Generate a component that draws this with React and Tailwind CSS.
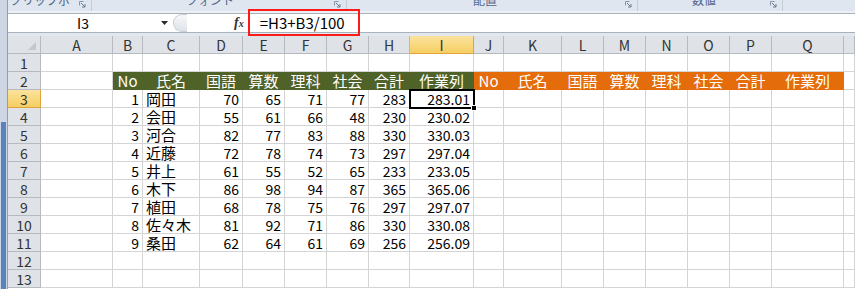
const COLS = ['A', 'B', 'C', 'D', 'E', 'F', 'G', 'H', 'I', 'J', 'K', 'L', 'M', 'N', 'O', 'P', 'Q', '']

const HEAD = ['No', '氏名', '国語', '算数', '理科', '社会', '合計', '作業列']

const DATA = [
  [1, '岡田', 70, 65, 71, 77, 283, '283.01'],
  [2, '会田', 55, 61, 66, 48, 230, '230.02'],
  [3, '河合', 82, 77, 83, 88, 330, '330.03'],
  [4, '近藤', 72, 78, 74, 73, 297, '297.04'],
  [5, '井上', 61, 55, 52, 65, 233, '233.05'],
  [6, '木下', 86, 98, 94, 87, 365, '365.06'],
  [7, '植田', 68, 78, 75, 76, 297, '297.07'],
  [8, '佐々木', 81, 92, 71, 86, 330, '330.08'],
  [9, '桑田', 62, 64, 61, 69, 256, '256.09'],
]

const GRID =
  'grid grid-cols-[33px_72px_30px_57px_43px_42px_42px_42px_41px_64px_30px_58px_42px_42px_42px_42px_42px_72px_1fr]'

function Launcher() {
  return (
    <svg width="7" height="7" viewBox="0 0 7 7" className="absolute right-[5px] top-[1px]">
      <path d="M0.5 0.5h4M0.5 0.5v4" stroke="#8795a8" fill="none" />
      <path d="M2 2l4 4M6 3v3h-3" stroke="#6a7a90" fill="none" />
    </svg>
  )
}

function Group({ label, className, pad }) {
  return (
    <div className={'relative flex h-full shrink-0 justify-center border-r border-[#c5ccd6] ' + className}>
      <span className={'-mt-[8px] text-[12px] leading-[16px] text-[#50668a] ' + pad}>{label}</span>
      <Launcher />
    </div>
  )
}

function Cell({ row, col }) {
  let text = null
  let kind = 'plain'
  if (row === 2 && col >= 1 && col <= 8) {
    kind = 'green'
    text = HEAD[col - 1]
  } else if (row === 2 && col >= 9 && col <= 16) {
    kind = 'orange'
    text = HEAD[col - 9]
  } else if (row >= 3 && row <= 11 && col >= 1 && col <= 8) {
    text = DATA[row - 3][col - 1]
    kind = col === 2 ? 'name' : 'num'
  }

  const selected = row === 3 && col === 8

  const cls = {
    plain: 'bg-white border-[#d4d4d4]',
    green: 'bg-[#4f6228] border-[#4f6228] text-white justify-center text-[15px]',
    orange: 'bg-[#e46c0a] border-[#e46c0a] text-white justify-center text-[15px]',
    name: 'bg-white border-[#d4d4d4] text-black justify-start pl-[3px] text-[15px]',
    num: 'bg-white border-[#d4d4d4] text-black justify-end pr-[3px] text-[14px]',
  }[kind]

  return (
    <div className={'relative flex h-[18px] items-center whitespace-nowrap border-r border-b leading-[16px] ' + cls}>
      {text}
      {selected && (
        <div className="pointer-events-none absolute -left-px -top-px z-10 h-[20px] w-[66px] border-2 border-black">
          <div className="absolute -bottom-[4px] -right-[4px] h-[6px] w-[6px] border border-white bg-black" />
        </div>
      )}
    </div>
  )
}

export default function App() {
  return (
    <div className="flex h-[289px] w-[855px] overflow-hidden bg-white font-['Noto_Sans_CJK_JP',sans-serif] text-black">
      {/* window edge */}
      <div className="flex w-[8px] shrink-0 flex-col border-r border-[#8e9fb6] bg-[#cdd6e2]">
        <div className="h-[122px]" />
        <div className="ml-px w-[5px] flex-1 bg-[#5a82bf]" />
      </div>

      <div className="flex min-w-0 flex-1 flex-col">
        {/* ribbon group labels, cut off */}
        <div className="flex h-[11px] overflow-hidden bg-[#dfe6ef]">
          <Group label="クリップボード" className="w-[84px] justify-start" pad="pl-[2px]" />
          <Group label="フォント" className="w-[255px]" pad="pr-[18px]" />
          <Group label="配置" className="w-[291px]" pad="pr-[14px]" />
          <Group label="数値" className="w-[145px]" pad="pr-[12px]" />
          <div className="flex-1" />
        </div>
        <div className="h-[2px] bg-[#edf1f6]" />

        {/* formula bar */}
        <div className="relative flex h-[20px] items-center border-y border-[#a7b1be] bg-white">
          <div className="flex w-[150px] justify-center text-[14px] leading-[16px]">I3</div>
          <svg width="8" height="5" viewBox="0 0 8 5" className="ml-[3px]">
            <path d="M0 0h7l-3.5 4z" fill="#2b2b2b" />
          </svg>
          <div className="ml-[4px] h-[18px] w-[14px] rounded-l-full border border-r-0 border-[#c9ced6] bg-gradient-to-b from-[#f7f8fa] to-[#dfe3e8]" />
          <div className="ml-[47px] font-['Liberation_Serif',serif] text-[14px] font-bold italic leading-[16px] text-[#333]">
            f<span className="text-[10px]">x</span>
          </div>
          <div className="ml-[16px] text-[15px] leading-[16px]">=H3+B3/100</div>
          <div className="absolute left-[240px] top-[-5px] h-[27px] w-[112px] border-2 border-[#ff1a1a]" />
        </div>
        <div className="h-[3px] bg-[#e3e8ee]" />

        {/* column headers */}
        <div className={GRID + ' text-[14px] leading-[16px] text-[#333]'}>
          <div className="relative h-[18px] border-r border-b border-[#b5bac1] bg-[#dfe3e8]">
            <svg width="8" height="8" viewBox="0 0 8 8" className="absolute bottom-[3px] right-[4px]">
              <path d="M8 0v8h-8z" fill="#c3c8ce" />
            </svg>
          </div>
          {COLS.map((c) =>
            c === 'I' ? (
              <div
                key={c}
                className="flex h-[18px] items-center justify-center border-r border-b border-[#e1a33c] bg-gradient-to-b from-[#fbe39c] to-[#f6cf62]"
              >
                {c}
              </div>
            ) : (
              <div
                key={c || 'R'}
                className="flex h-[18px] items-center justify-center border-r border-b border-[#b5bac1] bg-[#dfe3e8]"
              >
                {c}
              </div>
            )
          )}
        </div>

        {/* rows */}
        {Array.from({ length: 13 }, (_, i) => i + 1).map((r) => (
          <div key={r} className={GRID}>
            {r === 3 ? (
              <div className="flex h-[18px] items-center justify-center border-r border-b border-[#e1a33c] bg-gradient-to-b from-[#fbe39c] to-[#f6cf62] text-[14px] leading-[16px] text-[#333]">
                {r}
              </div>
            ) : (
              <div className="flex h-[18px] items-center justify-center border-r border-b border-[#b5bac1] bg-[#dfe3e8] text-[14px] leading-[16px] text-[#333]">
                {r}
              </div>
            )}
            {COLS.map((c, ci) => (
              <Cell key={ci} row={r} col={ci} />
            ))}
          </div>
        ))}
      </div>
    </div>
  )
}
